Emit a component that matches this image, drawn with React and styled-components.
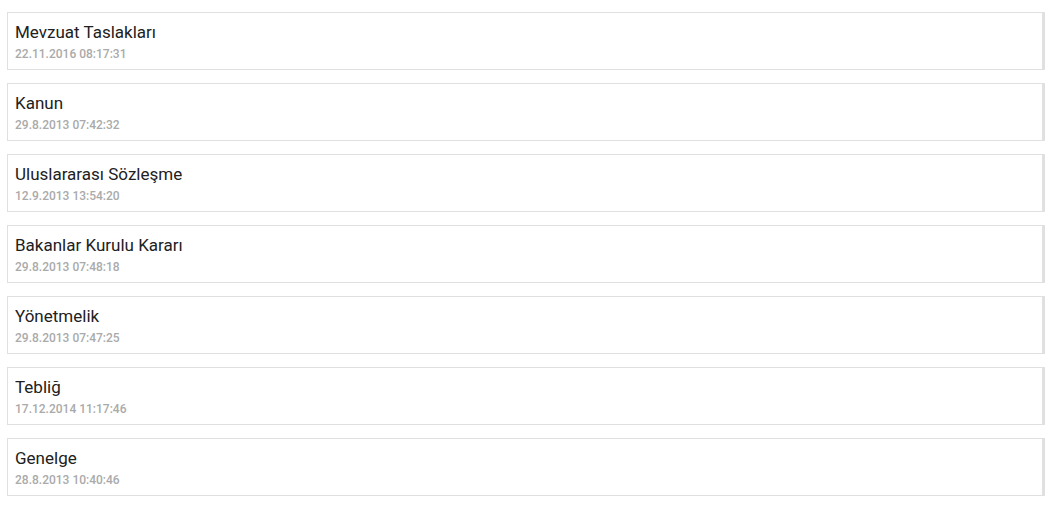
import React from 'react';
import styled, { createGlobalStyle } from 'styled-components';

const GlobalStyle = createGlobalStyle`
  html, body {
    margin: 0;
    padding: 0;
    background: #ffffff;
    font-family: Roboto, "Liberation Sans", Arial, sans-serif;
  }
`;

const List = styled.div`
  display: flex;
  flex-direction: column;
  gap: 13px;
  padding: 12px 10px 0 7px;
`;

const Card = styled.div`
  display: flex;
  flex-direction: column;
  border: 1px solid #e0e0e0;
  border-right-width: 3px;
  padding: 9px 7px 4px;
  box-sizing: content-box;
  height: 43px;
  background: #fff;
`;

const Title = styled.div`
  font-size: 17px;
  line-height: 21px;
  color: #212121;
`;

const Date = styled.div`
  font-size: 12px;
  line-height: 22px;
  font-weight: 500;
  color: #aaaaaa;
`;

const items = [
  { title: 'Mevzuat Taslakları', date: '22.11.2016 08:17:31' },
  { title: 'Kanun', date: '29.8.2013 07:42:32' },
  { title: 'Uluslararası Sözleşme', date: '12.9.2013 13:54:20' },
  { title: 'Bakanlar Kurulu Kararı', date: '29.8.2013 07:48:18' },
  { title: 'Yönetmelik', date: '29.8.2013 07:47:25' },
  { title: 'Tebliğ', date: '17.12.2014 11:17:46' },
  { title: 'Genelge', date: '28.8.2013 10:40:46' },
];

const App = () => (
  <>
    <GlobalStyle />
    <List>
      {items.map((item) => (
        <Card key={item.title}>
          <Title>{item.title}</Title>
          <Date>{item.date}</Date>
        </Card>
      ))}
    </List>
  </>
);

export default App;
